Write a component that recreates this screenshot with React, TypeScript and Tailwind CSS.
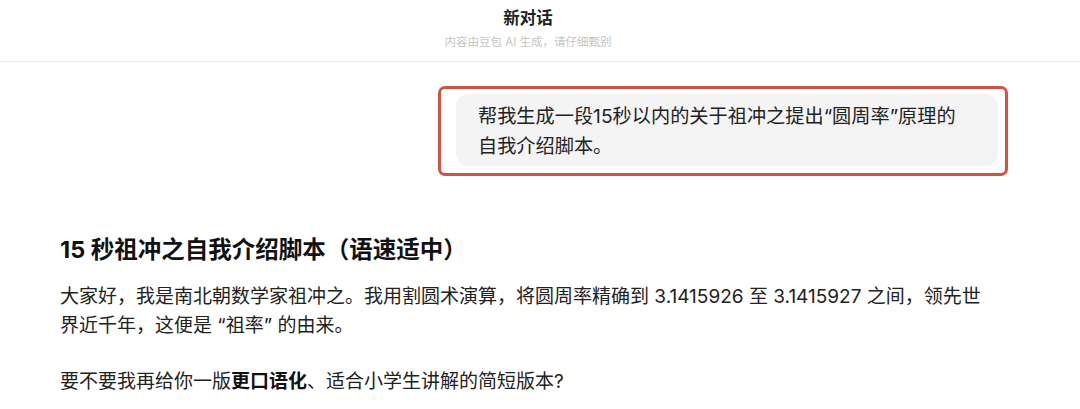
const font = "font-['Inter','Noto_Sans_CJK_SC',sans-serif]";

export default function App() {
  return (
    <div className={`w-[1080px] h-[409px] overflow-hidden bg-white text-[#1c1c1c] ${font}`}>
      {/* header */}
      <header className="h-[62px] border-b border-[#ebebeb] flex flex-col items-center pr-[24px]">
        <h1 className="mt-[7px] text-[16.5px] leading-[22px] font-semibold text-[#1f1f1f]">新对话</h1>
        <p className="mt-[5px] text-[11.5px] leading-[16px] text-[#c4c4c4]">内容由豆包 AI 生成，请仔细甄别</p>
      </header>

      <main className="pl-[60px] pr-[72px]">
        {/* user message, outlined */}
        <div className="mt-[24px] ml-auto w-[570px] h-[90px] border-[3px] border-[#d4533f] rounded-[7px] pl-[15px] pr-[7px] pt-[5px]">
          <div className="bg-[#f4f4f5] rounded-[12px] pl-[22px] pr-[16px] pt-[7px] pb-[5px] text-[19.2px] leading-[30px] text-[#222]">
            帮我生成一段15秒以内的关于祖冲之提出“圆周率”原理的
            <br />
            自我介绍脚本。
          </div>
        </div>

        {/* answer */}
        <h2 className="mt-[58px] text-[23.5px] leading-[32px] font-bold text-[#111]">15 秒祖冲之自我介绍脚本（语速适中）</h2>
        <div className="mr-[20px]">
          <p className="mt-[16px] text-[19px] leading-[29px] text-[#222]">
            大家好，我是南北朝数学家祖冲之。我用割圆术演算，将圆周率精确到 3.1415926 至 3.1415927 之间，领先世界近千年，这便是 “祖率” 的由来。
          </p>
          <p className="mt-[27px] text-[19px] leading-[29px] text-[#222]">
            要不要我再给你一版<span className="font-bold text-[#111]">更口语化</span>、适合小学生讲解的简短版本?
          </p>
        </div>
      </main>
    </div>
  );
}
